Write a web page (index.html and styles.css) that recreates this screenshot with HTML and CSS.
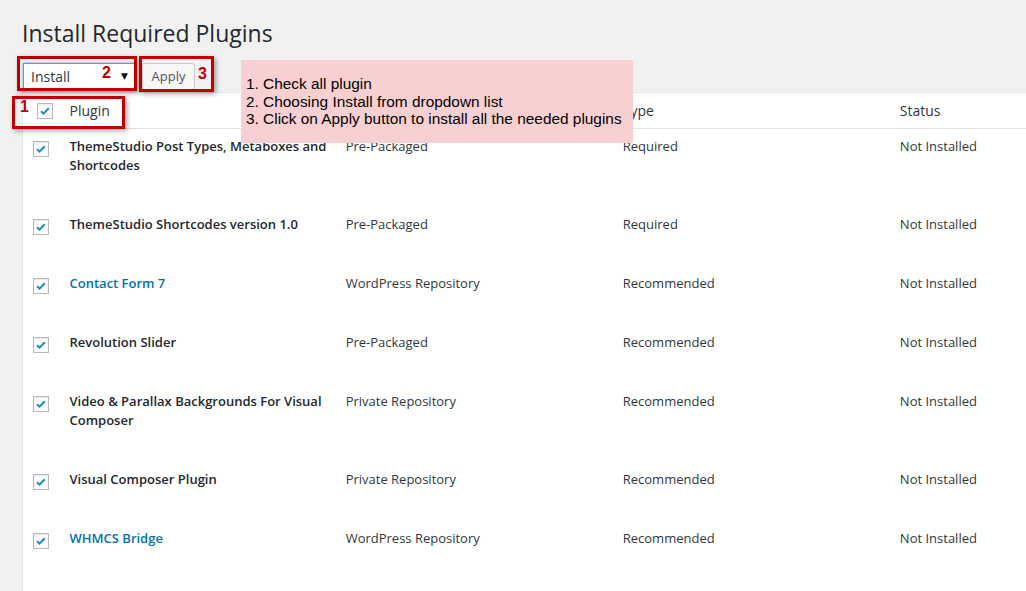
FILE: index.html
```html
<!DOCTYPE html>
<html>
<head>
<meta charset="utf-8">
<link rel="stylesheet" href="styles.css">
</head>
<body>
<div class="wrap">
  <h1 class="title">Install Required Plugins</h1>
  <div class="tablenav">
    <div class="select">
      <span class="select-label">Install</span>
      <span class="select-arrow">&#9660;</span>
    </div>
    <div class="apply">Apply</div>
  </div>
  <table class="plugins">
    <thead>
      <tr>
        <th class="cb head-cb"><span class="chk"><svg viewBox="0 0 16 16" width="14" height="14"><path d="M3.5 8.2l2.8 2.8 6-6.2" fill="none" stroke="#1e8cbe" stroke-width="2.4"/></svg></span></th>
        <th class="col first">Plugin</th>
        <th class="col">Source</th>
        <th class="col">Type</th>
        <th class="col">Status</th>
      </tr>
    </thead>
    <tbody>
      <tr>
        <td class="cb"><span class="chk"><svg viewBox="0 0 16 16" width="14" height="14"><path d="M3.5 8.2l2.8 2.8 6-6.2" fill="none" stroke="#1e8cbe" stroke-width="2.4"/></svg></span></td>
        <td class="col first name">ThemeStudio Post Types, Metaboxes and Shortcodes</td>
        <td class="col">Pre-Packaged</td>
        <td class="col">Required</td>
        <td class="col">Not Installed</td>
      </tr>
      <tr>
        <td class="cb"><span class="chk"><svg viewBox="0 0 16 16" width="14" height="14"><path d="M3.5 8.2l2.8 2.8 6-6.2" fill="none" stroke="#1e8cbe" stroke-width="2.4"/></svg></span></td>
        <td class="col first name">ThemeStudio Shortcodes version 1.0</td>
        <td class="col">Pre-Packaged</td>
        <td class="col">Required</td>
        <td class="col">Not Installed</td>
      </tr>
      <tr>
        <td class="cb"><span class="chk"><svg viewBox="0 0 16 16" width="14" height="14"><path d="M3.5 8.2l2.8 2.8 6-6.2" fill="none" stroke="#1e8cbe" stroke-width="2.4"/></svg></span></td>
        <td class="col first name link">Contact Form 7</td>
        <td class="col">WordPress Repository</td>
        <td class="col">Recommended</td>
        <td class="col">Not Installed</td>
      </tr>
      <tr>
        <td class="cb"><span class="chk"><svg viewBox="0 0 16 16" width="14" height="14"><path d="M3.5 8.2l2.8 2.8 6-6.2" fill="none" stroke="#1e8cbe" stroke-width="2.4"/></svg></span></td>
        <td class="col first name">Revolution Slider</td>
        <td class="col">Pre-Packaged</td>
        <td class="col">Recommended</td>
        <td class="col">Not Installed</td>
      </tr>
      <tr>
        <td class="cb"><span class="chk"><svg viewBox="0 0 16 16" width="14" height="14"><path d="M3.5 8.2l2.8 2.8 6-6.2" fill="none" stroke="#1e8cbe" stroke-width="2.4"/></svg></span></td>
        <td class="col first name">Video &amp; Parallax Backgrounds For Visual Composer</td>
        <td class="col">Private Repository</td>
        <td class="col">Recommended</td>
        <td class="col">Not Installed</td>
      </tr>
      <tr>
        <td class="cb"><span class="chk"><svg viewBox="0 0 16 16" width="14" height="14"><path d="M3.5 8.2l2.8 2.8 6-6.2" fill="none" stroke="#1e8cbe" stroke-width="2.4"/></svg></span></td>
        <td class="col first name">Visual Composer Plugin</td>
        <td class="col">Private Repository</td>
        <td class="col">Recommended</td>
        <td class="col">Not Installed</td>
      </tr>
      <tr class="last">
        <td class="cb"><span class="chk"><svg viewBox="0 0 16 16" width="14" height="14"><path d="M3.5 8.2l2.8 2.8 6-6.2" fill="none" stroke="#1e8cbe" stroke-width="2.4"/></svg></span></td>
        <td class="col first name link">WHMCS Bridge</td>
        <td class="col">WordPress Repository</td>
        <td class="col">Recommended</td>
        <td class="col">Not Installed</td>
      </tr>
    </tbody>
  </table>
</div>

<div class="mark mark-select"></div>
<div class="mark mark-apply"></div>
<div class="mark mark-head"></div>
<span class="num num1">1</span>
<span class="num num2">2</span>
<span class="num num3">3</span>
<div class="note">
  1. Check all plugin<br>
  2. Choosing Install from dropdown list<br>
  3. Click on Apply button to install all the needed plugins
</div>
</body>
</html>
```

FILE: styles.css
```css
html, body {
  margin: 0;
  padding: 0;
}
body {
  background: #f1f1f1;
  width: 1026px;
  height: 591px;
  overflow: hidden;
  font-family: "Open Sans", "Liberation Sans", sans-serif;
  font-size: 13px;
  color: #32373c;
  position: relative;
}
.wrap {
  padding-left: 22px;
}
.title {
  margin: 0;
  padding-top: 17px;
  font-size: 23px;
  font-weight: 400;
  line-height: 32px;
  color: #23282d;
  height: 45px;
}
.tablenav {
  display: flex;
  align-items: center;
  height: 28px;
  margin-bottom: 2px;
  gap: 7px;
}
.select {
  box-sizing: border-box;
  width: 112px;
  height: 27px;
  margin-left: 1px;
  background: #fff;
  border: 1px solid #5b9dd9;
  box-shadow: 0 0 2px rgba(30, 140, 190, 0.8);
  display: flex;
  align-items: center;
  justify-content: space-between;
  padding: 0 6px 0 7px;
  font-size: 14px;
  color: #32373c;
}
.select-arrow {
  font-size: 9px;
  color: #111;
  font-family: "DejaVu Sans", sans-serif;
}
.apply {
  box-sizing: border-box;
  height: 27px;
  width: 53px;
  background: #f7f7f7;
  border: 1px solid #ccc;
  border-radius: 3px;
  box-shadow: 0 1px 0 #ccc;
  color: #555;
  font-size: 13px;
  display: flex;
  align-items: center;
  justify-content: center;
}
.plugins {
  border-collapse: collapse;
  table-layout: fixed;
  width: 1146px;
  background: #fff;
  border: 1px solid #e5e5e5;
  border-bottom: none;
}
.plugins th, .plugins td {
  text-align: left;
  vertical-align: top;
  padding: 0;
}
.plugins thead th {
  height: 35px;
  border-bottom: 1px solid #e1e1e1;
  font-weight: 400;
  font-size: 14px;
  line-height: 19px;
  color: #32373c;
  vertical-align: middle;
}
.plugins th.col, .plugins td.col {
  width: 257px;
  padding-left: 10px;
  padding-right: 10px;
}
.plugins th.first, .plugins td.first {
  width: 260px;
  padding-left: 11px;
  padding-right: 6px;
}
.plugins .cb {
  width: 36px;
}
.plugins td.col {
  padding-top: 8px;
  padding-bottom: 32px;
  line-height: 19px;
}
.plugins tr.last td.col {
  padding-bottom: 60px;
}
.plugins td.cb {
  padding-top: 12px;
  padding-left: 10px;
  box-sizing: border-box;
}
.plugins th.head-cb {
  padding-left: 14px;
  box-sizing: border-box;
  vertical-align: middle;
}
.chk {
  box-sizing: border-box;
  display: flex;
  align-items: center;
  justify-content: center;
  width: 16px;
  height: 16px;
  background: #fff;
  border: 1px solid #b4b9be;
  box-shadow: inset 0 1px 2px rgba(0, 0, 0, 0.1);
}
.name {
  font-weight: 600;
  color: #23282d;
}
.name.link {
  color: #0073aa;
}
.mark {
  position: absolute;
  box-sizing: border-box;
  border: 3px solid #bf0000;
  box-shadow: 2px 2px 5px rgba(0, 0, 0, 0.35);
}
.mark-select {
  left: 17px;
  top: 56px;
  width: 120px;
  height: 35px;
}
.mark-apply {
  left: 139px;
  top: 56px;
  width: 75px;
  height: 36px;
}
.mark-head {
  left: 12px;
  top: 96px;
  width: 113px;
  height: 33px;
}
.num {
  position: absolute;
  font-family: "Liberation Sans", Arial, sans-serif;
  font-weight: 700;
  font-size: 16px;
  line-height: 16px;
  color: #c00000;
}
.num1 { left: 20px; top: 99px; }
.num2 { left: 102px; top: 65px; }
.num3 { left: 198px; top: 66px; }
.note {
  position: absolute;
  left: 241px;
  top: 60px;
  width: 392px;
  height: 83px;
  box-sizing: border-box;
  padding: 15px 0 0 5px;
  background: #f8d0d2;
  font-family: "Liberation Sans", Arial, sans-serif;
  font-size: 15.4px;
  line-height: 17.5px;
  white-space: nowrap;
  color: #000;
}
```
